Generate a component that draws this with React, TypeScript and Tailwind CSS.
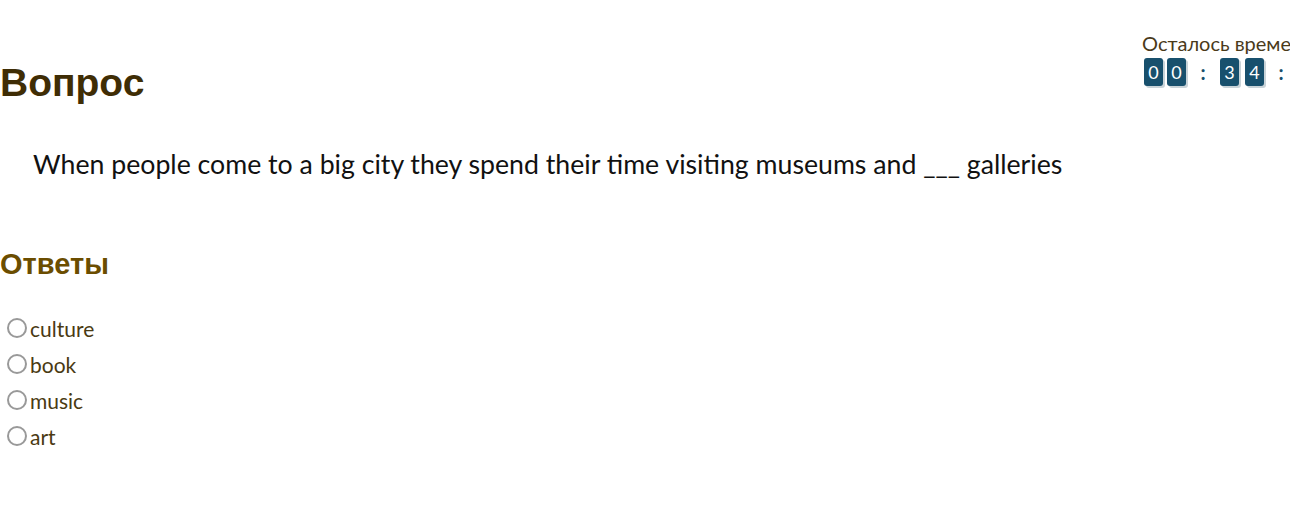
import React from "react";

const answers = ["culture", "book", "music", "art"];

function Digit({ value }: { value: string }) {
  return (
    <span className="flex h-[28px] w-[19px] items-center justify-center rounded-[3px] bg-[#18506d] text-[18px] leading-none text-white shadow-[2px_2px_0_#c9d3d8]">
      {value}
    </span>
  );
}

function Colon() {
  return <span className="w-[34px] text-center text-[20px] font-bold leading-none text-[#18506d]">:</span>;
}

export default function App() {
  return (
    <div className="h-[517px] w-[1290px] overflow-hidden bg-white font-['Lato','Open_Sans',sans-serif]">
      <div className="flex w-[1400px]">
        <div className="w-[1142px] shrink-0">
          <h1 className="mt-[58px] font-['Liberation_Sans',Arial,sans-serif] text-[39px] font-bold leading-[50px] text-[#3f2d05]">
            Вопрос
          </h1>
          <p className="mt-[40px] whitespace-nowrap pl-[33px] text-[26.7px] leading-[32px] text-[#111]">
            When people come to a big city they spend their time visiting museums and ___ galleries
          </p>
          <h2 className="mt-[66px] font-['Liberation_Sans',Arial,sans-serif] text-[29px] font-bold leading-[36px] text-[#6b4d00]">
            Ответы
          </h2>
          <div className="mt-[34px] flex flex-col gap-[12px] pl-[7px]">
            {answers.map((a) => (
              <label key={a} className="flex h-[24px] items-center">
                <span className="h-[20px] w-[20px] rounded-full border-2 border-[#999]" />
                <span className="ml-[3px] text-[21px] leading-none text-[#4a3a12]">{a}</span>
              </label>
            ))}
          </div>
        </div>
        <div className="w-[240px] shrink-0 pt-[32px]">
          <div className="whitespace-nowrap text-[20px] leading-[22px] text-[#4a3a1a]">Осталось времени</div>
          <div className="mt-[4px] flex items-center pl-[2px]">
            <Digit value="0" />
            <span className="w-[4px]" />
            <Digit value="0" />
            <Colon />
            <Digit value="3" />
            <span className="w-[6px]" />
            <Digit value="4" />
            <Colon />
            <Digit value="1" />
          </div>
        </div>
      </div>
    </div>
  );
}
